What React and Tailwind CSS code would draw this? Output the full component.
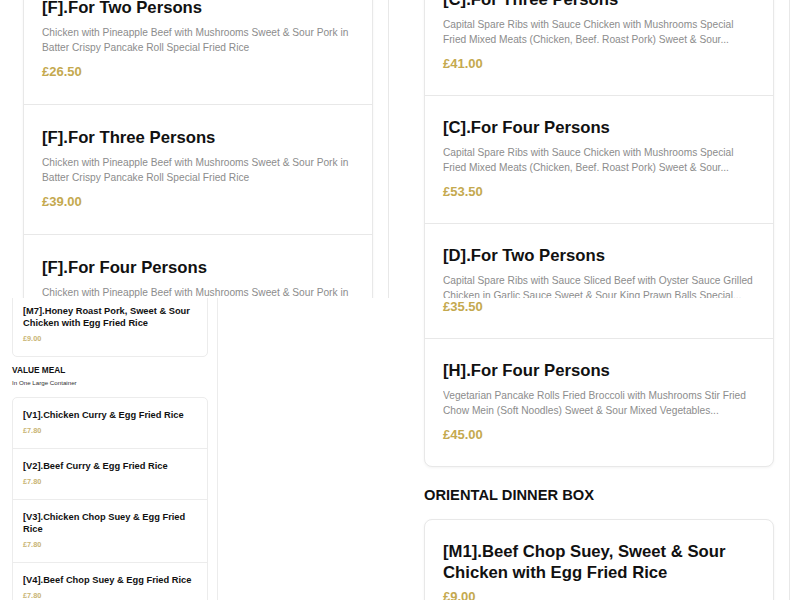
import React from "react";

const fTwo =
  "Chicken with Pineapple Beef with Mushrooms Sweet & Sour Pork in Batter Crispy Pancake Roll Special Fried Rice";
const cDesc =
  "Capital Spare Ribs with Sauce Chicken with Mushrooms Special Fried Mixed Meats (Chicken, Beef. Roast Pork) Sweet & Sour...";
const dDesc =
  "Capital Spare Ribs with Sauce Sliced Beef with Oyster Sauce Grilled Chicken in Garlic Sauce Sweet & Sour King Prawn Balls Special...";
const hDesc =
  "Vegetarian Pancake Rolls Fried Broccoli with Mushrooms Stir Fried Chow Mein (Soft Noodles) Sweet & Sour Mixed Vegetables...";

const setF = [
  { title: "[F].For Two Persons", desc: fTwo, price: "£26.50" },
  { title: "[F].For Three Persons", desc: fTwo, price: "£39.00" },
  { title: "[F].For Four Persons", desc: fTwo, price: "£52.00" },
];

const setC = [
  { title: "[C].For Three Persons", desc: cDesc, price: "£41.00" },
  { title: "[C].For Four Persons", desc: cDesc, price: "£53.50" },
  { title: "[D].For Two Persons", desc: dDesc, price: "£35.50" },
];

const setH = [
  { title: "[D].For Two Persons", desc: dDesc, price: "£35.50" },
  { title: "[H].For Four Persons", desc: hDesc, price: "£45.00" },
];

const valueMeals = [
  { title: "[V1].Chicken Curry & Egg Fried Rice", price: "£7.80" },
  { title: "[V2].Beef Curry & Egg Fried Rice", price: "£7.80" },
  { title: "[V3].Chicken Chop Suey & Egg Fried Rice", price: "£7.80" },
  { title: "[V4].Beef Chop Suey & Egg Fried Rice", price: "£7.80" },
];

function BigCard({ item, tall }) {
  return (
    <div
      className={
        "border-t border-[#e8e8e8] first:border-t-0 px-[18px] " +
        (tall ? "pt-[22px] pb-[23px]" : "pt-[21px] pb-[22px]")
      }
    >
      <h3 className="text-[16.7px] font-bold leading-[21px] text-[#111]">
        {item.title}
      </h3>
      {item.desc && (
        <p className="mt-[7px] line-clamp-2 text-[10.2px] leading-[15px] text-[#8c8c8c]">
          {item.desc}
        </p>
      )}
      <div
        className={
          "text-[13px] font-bold leading-[18px] text-[#c4a94f] " +
          (item.desc ? "mt-[8px]" : "mt-[5px]")
        }
      >
        {item.price}
      </div>
    </div>
  );
}

function BigBox({ items, tall, className }) {
  return (
    <div
      className={
        "w-[350px] overflow-hidden rounded-lg border border-[#e8e8e8] bg-white shadow-[0_1px_3px_rgba(0,0,0,0.05)] " +
        className
      }
    >
      {items.map((item, i) => (
        <BigCard key={i} item={item} tall={tall} />
      ))}
    </div>
  );
}

function SmallCard({ item }) {
  return (
    <div className="border-t border-[#ececec] first:border-t-0 px-[10px] pt-[11px] pb-[13.5px]">
      <h4 className="text-[9.3px] font-bold leading-[12px] text-[#111]">
        {item.title}
      </h4>
      <div className="mt-[4.5px] text-[7.3px] font-bold leading-[9px] text-[#c9b574]">
        {item.price}
      </div>
    </div>
  );
}

export default function App() {
  return (
    <div className="flex h-[600px] w-[800px] flex-col overflow-hidden bg-white font-['Liberation_Sans',Arial,sans-serif]">
      {/* top strip */}
      <div className="flex h-[298px] shrink-0 overflow-hidden">
        <div className="h-full w-[389px] shrink-0 overflow-hidden border-r border-[#e8e8e8] pl-[23px]">
          <BigBox items={setF} tall className="mt-[-26px]" />
        </div>
        <div className="h-full w-[401px] shrink-0 overflow-hidden border-r border-[#e8e8e8] pl-[35px]">
          <BigBox items={setC} className="mt-[-33px]" />
        </div>
      </div>

      {/* bottom strip */}
      <div className="flex h-[302px] shrink-0 overflow-hidden">
        <div className="h-full w-[400px] shrink-0 overflow-hidden">
          <div className="h-full w-[218px] overflow-hidden border-r border-[#ececec] pl-[12px]">
            <div className="mt-[-5px] w-[196px] overflow-hidden rounded-[5px] border border-[#ececec] bg-white">
              <SmallCard
                item={{
                  title: "[M7].Honey Roast Pork, Sweet & Sour Chicken with Egg Fried Rice",
                  price: "£9.00",
                }}
              />
            </div>
            <h2 className="mt-[7px] text-[8.3px] font-bold leading-[12px] text-[#111]">
              VALUE MEAL
            </h2>
            <p className="mt-[3px] text-[6.2px] leading-[8px] text-[#333]">
              In One Large Container
            </p>
            <div className="mt-[10px] w-[196px] overflow-hidden rounded-[5px] border border-[#ececec] bg-white">
              {valueMeals.map((item, i) => (
                <SmallCard key={i} item={item} />
              ))}
            </div>
          </div>
        </div>
        <div className="h-full w-[390px] shrink-0 overflow-hidden border-r border-[#e8e8e8] pl-[24px]">
          <BigBox items={setH} className="mt-[-88px]" />
          <h2 className="mt-[18px] text-[14.7px] font-bold leading-[20px] text-[#111]">
            ORIENTAL DINNER BOX
          </h2>
          <BigBox
            className="mt-[14px]"
            items={[
              {
                title: "[M1].Beef Chop Suey, Sweet & Sour Chicken with Egg Fried Rice",
                price: "£9.00",
              },
            ]}
          />
        </div>
      </div>
    </div>
  );
}
